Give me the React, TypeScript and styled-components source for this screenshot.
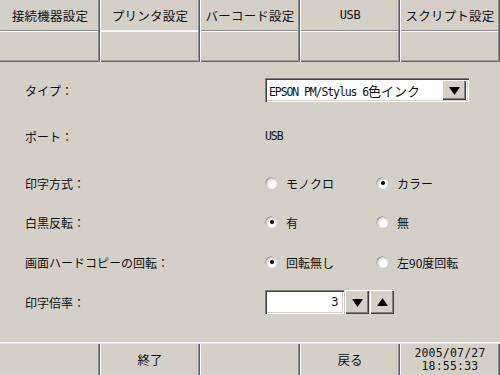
import React from "react";
import styled, { createGlobalStyle } from "styled-components";

const bg = "#d4d0c8";
const jp = `"Noto Sans CJK JP", "Noto Sans", sans-serif`;
const mono = `"DejaVu Sans Mono", "Liberation Mono", "Noto Sans CJK JP", monospace`;

const GlobalStyle = createGlobalStyle`
  body {
    margin: 0;
    background: ${bg};
    font-family: ${jp};
  }
`;

const topTabs = ["接続機器設定", "プリンタ設定", "バーコード設定", "USB", "スクリプト設定"];

export default function App() {
  return (
    <Screen>
      <GlobalStyle />
      <TabGrid>
        {topTabs.map((t, i) => (
          <TabCell key={t} $row={1} $active={i === 1} $first={i === 0}>
            {t === "USB" ? <Narrow $size={12}>{t}</Narrow> : t}
          </TabCell>
        ))}
        {topTabs.map((t, i) => (
          <TabCell key={t + "-2"} $row={2} $active={i === 1} $first={i === 0} />
        ))}
      </TabGrid>

      <Form>
        <Row $top={15}>
          <Label>タイプ：</Label>
          <Dropdown>
            <DropText>
              <Narrow>EPSON PM/Stylus 6</Narrow>色インク
            </DropText>
            <DropButton>
              <Tri dir="down" />
            </DropButton>
          </Dropdown>
        </Row>
        <Row $top={20}>
          <Label>ポート：</Label>
          <Narrow>USB</Narrow>
        </Row>
        <Row $top={21}>
          <Label>印字方式：</Label>
          <RadioPair options={["モノクロ", "カラー"]} checked={1} />
        </Row>
        <Row $top={13}>
          <Label>白黒反転：</Label>
          <RadioPair options={["有", "無"]} checked={0} />
        </Row>
        <Row $top={14}>
          <Label>画面ハードコピーの回転：</Label>
          <RadioPair options={["回転無し", "左90度回転"]} checked={0} />
        </Row>
        <Row $top={14}>
          <Label>印字倍率：</Label>
          <Spin>
            <SpinField>
              <Narrow $size={12}>3</Narrow>
            </SpinField>
            <SpinButton>
              <Tri dir="down" />
            </SpinButton>
            <SpinButton>
              <Tri dir="up" />
            </SpinButton>
          </Spin>
        </Row>
      </Form>

      <BottomBar>
        <BottomCell $first />
        <BottomCell>終了</BottomCell>
        <BottomCell />
        <BottomCell>戻る</BottomCell>
        <BottomCell>
          <Clock>
            <ClockLine>2005/07/27</ClockLine>
            <ClockLine>18:55:33</ClockLine>
          </Clock>
        </BottomCell>
      </BottomBar>
    </Screen>
  );
}

const RadioPair: React.FC<{ options: string[]; checked: number }> = ({ options, checked }) => (
  <Pair>
    {options.map((o, i) => (
      <Option key={o}>
        <RadioDot $on={i === checked} />
        <OptionText>{o}</OptionText>
      </Option>
    ))}
  </Pair>
);

const Tri: React.FC<{ dir: "up" | "down" }> = ({ dir }) => (
  <svg width="11" height="9" viewBox="0 0 11 9">
    <path d={dir === "down" ? "M0 1 H11 L5.5 9 Z" : "M0 8 H11 L5.5 0 Z"} fill="#000" />
  </svg>
);

const Screen = styled.div`
  width: 500px;
  height: 375px;
  background: ${bg};
  display: flex;
  flex-direction: column;
  color: #111;
  font-size: 12px;
  overflow: hidden;
`;

const TabGrid = styled.div`
  display: grid;
  grid-template-columns: repeat(5, 100px);
  grid-template-rows: 31px 31px;
`;

const TabCell = styled.div<{ $row: 1 | 2; $active?: boolean; $first?: boolean }>`
  display: flex;
  align-items: center;
  justify-content: center;
  font-size: 12.5px;
  letter-spacing: 0.2px;
  padding-bottom: 1px;
  box-shadow: ${(p) =>
    [
      p.$first ? null : "inset 1px 0 #ffffff",
      "inset -1px 0 #5c5c5c",
      "inset -2px 0 #909090",
      p.$row === 1
        ? p.$active
          ? "inset 0 -1px #f4f4f4"
          : "inset 0 -1px #8c8c8c"
        : "inset 0 1px #ffffff, inset 0 -1px #6a6a6a, inset 0 -2px #9a9a9a",
    ]
      .filter(Boolean)
      .join(", ")};
`;

const Narrow = styled.span<{ $size?: number }>`
  font-family: ${mono};
  font-size: ${(p) => p.$size ?? 11.5}px;
  letter-spacing: ${(p) => ((p.$size ?? 11.5) > 11.5 ? -0.4 : -1.1)}px;
`;

const Form = styled.div`
  display: flex;
  flex-direction: column;
  padding-left: 25px;
`;

const Row = styled.div<{ $top: number }>`
  display: flex;
  align-items: center;
  height: 26px;
  margin-top: ${(p) => p.$top}px;
`;

const Label = styled.div`
  width: 240px;
  font-size: 12px;
`;

const Sunken = styled.div`
  background: #ffffff;
  box-shadow: inset 1px 1px #808080, inset 2px 2px #404040, inset -1px -1px #ffffff,
    inset -2px -2px #d4d0c8;
`;

const Raised = styled.div`
  background: ${bg};
  display: flex;
  align-items: center;
  justify-content: center;
  box-shadow: inset 1px 1px #ffffff, inset -1px -1px #404040, inset -2px -2px #808080;
`;

const Dropdown = styled(Sunken)`
  width: 204px;
  height: 24px;
  display: flex;
  align-items: center;
  justify-content: space-between;
  padding: 2px 3px 2px 4px;
  box-sizing: border-box;
`;

const DropText = styled.span`
  font-size: 13px;
  white-space: nowrap;
`;

const DropButton = styled(Raised)`
  width: 24px;
  height: 20px;
`;

const Pair = styled.div`
  display: flex;
`;

const Option = styled.div`
  display: flex;
  align-items: center;
  width: 110px;
  gap: 9px;
  padding-left: 1px;
`;

const RadioDot = styled.span<{ $on: boolean }>`
  width: 11px;
  height: 11px;
  border-radius: 50%;
  box-sizing: border-box;
  background: radial-gradient(circle at 60% 60%, #ffffff 35%, #dcdad6 62%, #9a9894 85%, #8a8884 100%);
  box-shadow: -0.5px -0.5px 0.5px #7a7874;
  display: flex;
  align-items: center;
  justify-content: center;
  &::after {
    content: "";
    width: 4px;
    height: 4px;
    border-radius: 50%;
    background: ${(p) => (p.$on ? "#000" : "transparent")};
  }
`;

const OptionText = styled.span`
  font-size: 12px;
`;

const Spin = styled.div`
  display: flex;
  gap: 1px;
`;

const SpinField = styled(Sunken)`
  width: 79px;
  height: 24px;
  box-sizing: border-box;
  display: flex;
  align-items: center;
  justify-content: flex-end;
  padding-right: 6px;
`;

const SpinButton = styled(Raised)`
  width: 24px;
  height: 24px;
`;

const BottomBar = styled.div`
  margin-top: auto;
  display: grid;
  grid-template-columns: repeat(5, 100px);
  height: 33px;
`;

const BottomCell = styled.div<{ $first?: boolean }>`
  display: flex;
  align-items: center;
  justify-content: center;
  font-size: 12.5px;
  padding-top: 1px;
  box-shadow: inset 0 1px #ffffff, inset 0 2px #e8e6e2,
    ${(p) => (p.$first ? "" : "inset 1px 0 #ffffff,")} inset -1px 0 #5c5c5c,
    inset -2px 0 #909090;
`;

const Clock = styled.div`
  display: flex;
  flex-direction: column;
  align-items: center;
  gap: 1px;
`;

const ClockLine = styled.span`
  font-family: ${mono};
  font-size: 11.5px;
  line-height: 12px;
  letter-spacing: 0.2px;
`;
